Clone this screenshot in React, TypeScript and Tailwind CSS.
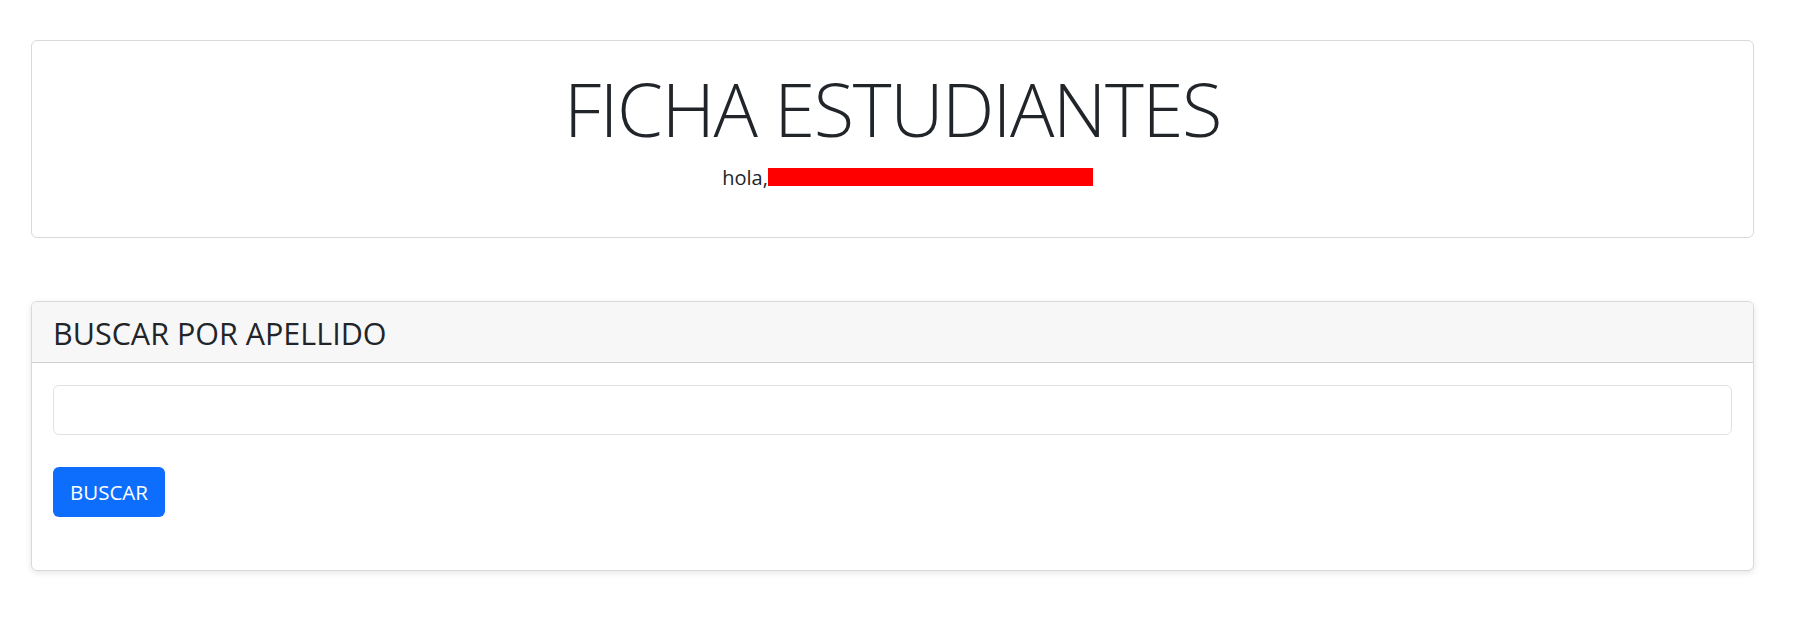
export default function App() {
  return (
    <div className="min-h-screen bg-white pl-[31px] pr-[41px] pt-[40px] text-[#212529] font-['Open_Sans','Liberation_Sans',sans-serif]">
      <div className="rounded-[6px] border border-[#d9d9d9] bg-white pt-[23px] pb-[44px] text-center">
        <h1 className="text-[74px] leading-[89px] font-light tracking-[-1.4px]">FICHA ESTUDIANTES</h1>
        <p className="mt-[10px] pl-[30px] text-[20px] leading-[30px]">
          hola,
          <span className="inline-block h-[18px] w-[325px] bg-[#ff0000] align-[-1px]" />
        </p>
      </div>

      <div className="mt-[63px] overflow-hidden rounded-[6px] border border-[#d9d9d9] bg-white shadow-[0_2px_6px_rgba(0,0,0,0.1)]">
        <div className="border-b border-[#d0d0d0] bg-[#f7f7f7] px-[21px] pt-[13px] pb-[11px]">
          <h3 className="text-[30.5px] leading-[36px]">BUSCAR POR APELLIDO</h3>
        </div>
        <div className="px-[21px] pt-[22px] pb-[53px]">
          <input
            type="text"
            className="block h-[50px] w-full rounded-[6px] border border-[#dee2e6] bg-white px-4 text-[20px] outline-none"
          />
          <button className="mt-[32px] flex h-[50px] w-[112px] items-center justify-center rounded-[6px] bg-[#0d6efd] text-[20.5px] text-white">
            BUSCAR
          </button>
        </div>
      </div>
    </div>
  );
}
